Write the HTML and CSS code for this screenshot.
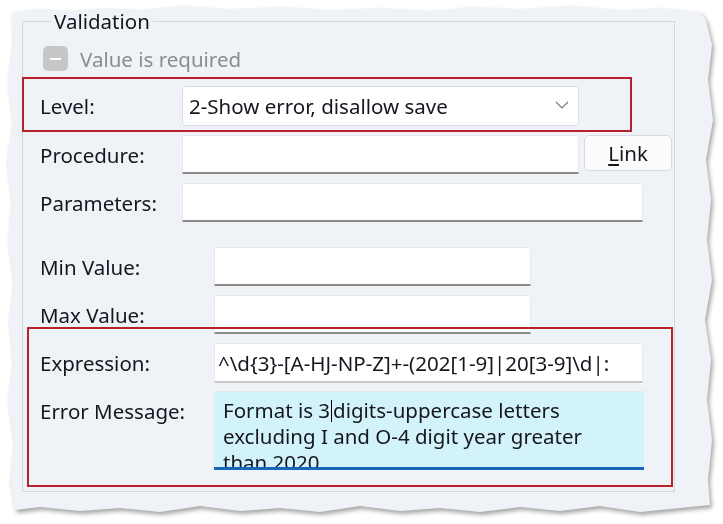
FILE: index.html
```html
<!DOCTYPE html>
<html>
<head>
<meta charset="utf-8">
<link rel="stylesheet" href="styles.css">
</head>
<body>
<div class="shadow">
  <div class="paper">
    <fieldset class="group">
      <legend class="legend">Validation</legend>
      <div class="check-row">
        <span class="checkbox"><span class="dash"></span></span>
        <span class="check-label">Value is required</span>
      </div>
      <div class="row row-level">
        <span class="label lw1">Level:</span>
        <div class="select">
          <span>2-Show error, disallow save</span>
          <svg class="chev" width="14" height="8" viewBox="0 0 14 8"><path d="M1 1 L7 7 L13 1" fill="none" stroke="#7a7a7a" stroke-width="1.2"/></svg>
        </div>
      </div>
      <div class="row">
        <span class="label lw1">Procedure:</span>
        <div class="input w-proc"></div>
        <button class="btn"><u>L</u>ink</button>
      </div>
      <div class="row">
        <span class="label lw1">Parameters:</span>
        <div class="input w-param"></div>
      </div>
      <div class="row row-min">
        <span class="label lw2">Min Value:</span>
        <div class="input w-min"></div>
      </div>
      <div class="row">
        <span class="label lw2">Max Value:</span>
        <div class="input w-min"></div>
      </div>
      <div class="row">
        <span class="label lw2">Expression:</span>
        <div class="input w-expr"><span class="expr-text">^\d{3}-[A-HJ-NP-Z]+-(202[1-9]|20[3-9]\d|:</span></div>
      </div>
      <div class="row row-err">
        <span class="label lw2">Error Message:</span>
        <div class="textarea">Format is 3<span class="caret"></span>digits-uppercase letters excluding I and O-4 digit year greater than 2020.</div>
      </div>
      <div class="mark mark-1"></div>
      <div class="mark mark-2"></div>
    </fieldset>
  </div>
</div>
</body>
</html>
```

FILE: styles.css
```css
html, body {
  margin: 0;
  padding: 0;
  background: #ffffff;
}
body {
  width: 723px;
  height: 524px;
  overflow: hidden;
  font-family: "Noto Sans", "Open Sans", sans-serif;
  color: #16161f;
}
.shadow {
  width: 723px;
  height: 524px;
  filter: drop-shadow(2px 3px 2px rgba(0,0,0,0.35));
}
.paper {
  width: 723px;
  height: 524px;
  box-sizing: border-box;
  background: #eff2f6;
  padding: 10px 47px 0 22px;
  clip-path: polygon(12px 12px, 40px 9px, 70px 11px, 100px 8px, 140px 10px, 180px 6px, 230px 9px, 280px 7px, 330px 10px, 380px 8px, 430px 11px, 470px 7px, 520px 9px, 570px 6px, 620px 10px, 660px 8px, 700px 12px,
    706px 20px, 712px 45px, 708px 80px, 713px 120px, 706px 160px, 711px 200px, 707px 240px, 712px 280px, 705px 320px, 711px 360px, 707px 400px, 712px 440px, 708px 480px, 710px 505px,
    680px 508px, 640px 512px, 600px 506px, 560px 511px, 520px 507px, 480px 512px, 440px 508px, 400px 511px, 360px 506px, 320px 512px, 280px 508px, 240px 511px, 200px 506px, 160px 512px, 120px 508px, 80px 511px, 40px 507px, 15px 510px,
    10px 480px, 14px 440px, 8px 400px, 13px 360px, 9px 320px, 14px 280px, 8px 240px, 12px 200px, 7px 160px, 13px 120px, 8px 80px, 13px 40px);
}
.group {
  position: relative;
  margin: 0;
  width: 653px;
  height: 482px;
  box-sizing: border-box;
  border: 1px solid #d3d7dc;
  padding: 14px 0 0 17px;
  font-size: 20.5px;
}
.legend {
  margin-left: 11px;
  padding: 0 3px;
  font-size: 20.5px;
  line-height: 22px;
}
.check-row {
  display: flex;
  align-items: center;
  height: 25px;
  margin-left: 3px;
}
.checkbox {
  width: 25px;
  height: 25px;
  border-radius: 5px;
  background: #c6c6c6;
  display: flex;
  align-items: center;
  justify-content: center;
}
.dash {
  width: 11px;
  height: 2px;
  background: #ffffff;
}
.check-label {
  margin-left: 12px;
  color: #8c8c8c;
}
.row {
  display: flex;
  align-items: center;
  margin-top: 9px;
}
.row-level {
  margin-top: 15px;
}
.row-min {
  margin-top: 25px;
}
.label {
  flex: none;
}
.lw1 { width: 142px; }
.lw2 { width: 174px; }
.select {
  box-sizing: border-box;
  width: 397px;
  height: 40px;
  background: #ffffff;
  border: 1px solid #dadde1;
  border-radius: 4px;
  display: flex;
  align-items: center;
  justify-content: space-between;
  padding: 0 9px 0 6px;
}
.chev {
  margin-bottom: 2px;
}
.input {
  box-sizing: border-box;
  height: 39px;
  background: #ffffff;
  border: 1px solid #e6e8eb;
  border-bottom: 2px solid #8a8a8a;
  border-radius: 3px 3px 0 0;
  overflow: hidden;
  white-space: nowrap;
  display: flex;
  align-items: center;
}
.w-proc { width: 397px; }
.w-param { width: 461px; }
.w-min { width: 317px; }
.w-expr { width: 429px; height: 40px; border-bottom-color: #c8c8c8; }
.expr-text {
  padding-left: 3px;
}
.btn {
  box-sizing: border-box;
  margin-left: 5px;
  width: 88px;
  height: 36px;
  align-self: flex-start;
  background: #fbfbfc;
  border: 1px solid #d6d9dd;
  border-radius: 5px;
  font-family: inherit;
  font-size: 20.5px;
  color: #16161f;
  padding: 0;
}
.btn u {
  text-decoration-thickness: 2px;
  text-underline-offset: 3px;
}
.row-err {
  align-items: flex-start;
  margin-top: 8px;
}
.row-err .label {
  margin-top: 6px;
}
.textarea {
  box-sizing: border-box;
  width: 430px;
  height: 79px;
  background: #d3f3fa;
  border-top: 1px solid #e6e8eb;
  border-bottom: 3px solid #1667b8;
  padding: 5px 30px 0 9px;
  line-height: 26px;
  overflow: hidden;
}
.caret {
  display: inline-block;
  width: 1px;
  height: 22px;
  background: #000000;
  vertical-align: -4px;
  margin: 0 1px;
}
.mark {
  position: absolute;
  border: 2px solid #b7222a;
  box-sizing: border-box;
}
.mark-1 {
  left: -1px;
  top: 45px;
  width: 610px;
  height: 55px;
}
.mark-2 {
  left: 4px;
  top: 295px;
  width: 646px;
  height: 160px;
}
```
